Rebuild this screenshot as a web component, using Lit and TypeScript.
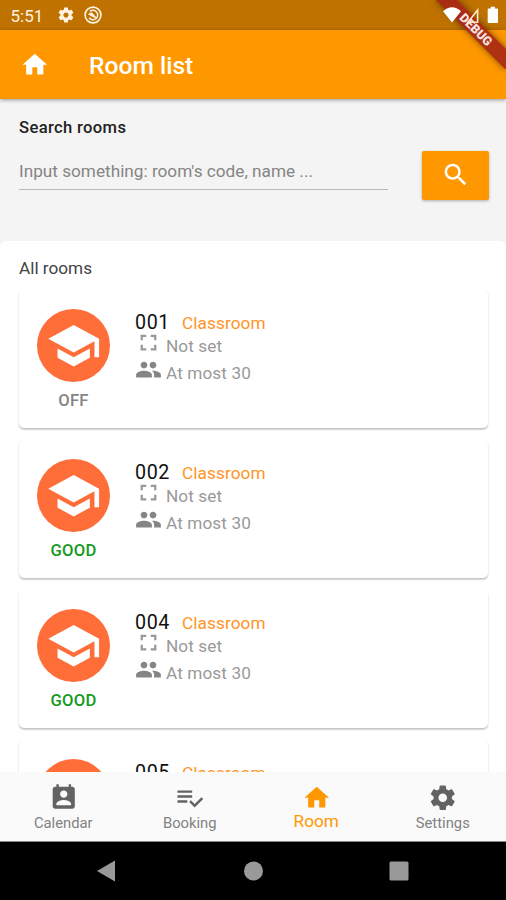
import { LitElement, html, css, svg } from "lit";
import { customElement, property } from "lit/decorators.js";

const ICONS: Record<string, string> = {
  home: "M10 20v-6h4v6h5v-8h3L12 3 2 12h3v8z",
  search:
    "M15.5 14h-.79l-.28-.27C15.41 12.59 16 11.11 16 9.5 16 5.91 13.09 3 9.5 3S3 5.91 3 9.5 5.91 16 9.5 16c1.61 0 3.09-.59 4.23-1.57l.27.28v.79l5 4.99L20.49 19l-4.99-5zm-6 0C7.01 14 5 11.99 5 9.5S7.01 5 9.5 5 14 7.01 14 9.5 11.99 14 9.5 14z",
  school: "M5 13.18v4L12 21l7-3.82v-4L12 17l-7-3.82zM12 3L1 9l11 6 9-4.91V17h2V9L12 3z",
  area: "M7 14H5v5h5v-2H7v-3zm-2-4h2V7h3V5H5v5zm12 7h-3v2h5v-5h-2v3zM14 5v2h3v3h2V5h-5z",
  people:
    "M16 11c1.66 0 2.99-1.34 2.99-3S17.66 5 16 5c-1.66 0-3 1.34-3 3s1.34 3 3 3zm-8 0c1.66 0 2.99-1.34 2.99-3S9.66 5 8 5C6.34 5 5 6.34 5 8s1.34 3 3 3zm0 2c-2.33 0-7 1.17-7 3.5V19h14v-2.5c0-2.33-4.67-3.5-7-3.5zm8 0c-.29 0-.62.02-.97.05 1.16.84 1.97 1.97 1.97 3.45V19h6v-2.5c0-2.33-4.67-3.5-7-3.5z",
  calendar:
    "M19 3h-1V1h-2v2H8V1H6v2H5c-1.11 0-2 .9-2 2v14c0 1.1.89 2 2 2h14c1.1 0 2-.9 2-2V5c0-1.1-.9-2-2-2zm-7 3c1.66 0 3 1.34 3 3s-1.34 3-3 3-3-1.34-3-3 1.34-3 3-3zm6 12H6v-1c0-2 4-3.1 6-3.1s6 1.1 6 3.1v1z",
  booking:
    "M14 10H2v2h12v-2zm0-4H2v2h12V6zM2 16h8v-2H2v2zm19.5-4.5L23 13l-6.99 7-4.51-4.5L13 14l3.01 3 5.49-5.5z",
  settings:
    "M19.43 12.98c.04-.32.07-.64.07-.98s-.03-.66-.07-.98l2.11-1.65c.19-.15.24-.42.12-.64l-2-3.46c-.12-.22-.39-.3-.61-.22l-2.49 1c-.52-.4-1.08-.73-1.69-.98l-.38-2.65C14.46 2.18 14.25 2 14 2h-4c-.25 0-.46.18-.49.42l-.38 2.65c-.61.25-1.17.59-1.69.98l-2.49-1c-.23-.09-.49 0-.61.22l-2 3.46c-.13.22-.07.49.12.64l2.11 1.65c-.04.32-.07.65-.07.98s.03.66.07.98l-2.11 1.65c-.19.15-.24.42-.12.64l2 3.46c.12.22.39.3.61.22l2.49-1c.52.4 1.08.73 1.69.98l.38 2.65c.03.24.24.42.49.42h4c.25 0 .46-.18.49-.42l.38-2.65c.61-.25 1.17-.59 1.69-.98l2.49 1c.23.09.49 0 .61-.22l2-3.46c.12-.22.07-.49-.12-.64l-2.11-1.65zM12 15.5c-1.93 0-3.5-1.57-3.5-3.5s1.57-3.5 3.5-3.5 3.5 1.57 3.5 3.5-1.57 3.5-3.5 3.5z",
};

@customElement("md-icon")
class MdIcon extends LitElement {
  @property() name = "home";
  static styles = css`
    :host { display: block; width: 29.5px; height: 29.5px; flex: none; }
    svg { display: block; width: 100%; height: 100%; fill: currentColor; }
  `;
  render() {
    return html`<svg viewBox="0 0 24 24">${svg`<path d=${ICONS[this.name]}></path>`}</svg>`;
  }
}

@customElement("room-card")
class RoomCard extends LitElement {
  @property() code = "";
  @property() status = "";
  static styles = css`
    :host {
      display: flex; box-sizing: border-box; height: 138px; padding-top: 19px; flex: none;
      background: #fff; border-radius: 5px;
      box-shadow: 0 1.5px 1.5px rgba(0,0,0,.16), 0 1px 2px rgba(0,0,0,.1);
    }
    .left { width: 73px; margin-left: 18px; display: flex; flex-direction: column; align-items: center; }
    .avatar {
      width: 73px; height: 73px; border-radius: 50%; background: #ff6d38; color: #fff;
      display: flex; align-items: center; justify-content: center;
    }
    .avatar md-icon { width: 55.4px; height: 55.4px; }
    .status { font-weight: 500; font-size: 16.6px; line-height: 20px; margin-top: 9px; letter-spacing: .3px; color: #858585; }
    .good { color: #159a1c; }
    .info { margin-left: 25px; color: #999; font-size: 17.2px; letter-spacing: .1px; }
    .head { display: flex; align-items: baseline; height: 24px; line-height: 28px; }
    .code { font-size: 19.7px; color: #111; letter-spacing: .6px; width: 47px; }
    .kind { color: #ff9426; }
    .line { display: flex; align-items: center; height: 27px; }
    .line md-icon { width: 27px; height: 27px; margin-right: 4px; }
    .size { height: 26px; }
    .size md-icon { margin-top: -8px; }
    .cap md-icon { margin-top: -7px; color: #858585; }
  `;
  render() {
    return html`
      <div class="left">
        <div class="avatar"><md-icon name="school"></md-icon></div>
        <div class="status ${this.status === "GOOD" ? "good" : ""}">${this.status}</div>
      </div>
      <div class="info">
        <div class="head"><span class="code">${this.code}</span><span class="kind">Classroom</span></div>
        <div class="line size"><md-icon name="area"></md-icon>Not set</div>
        <div class="line cap"><md-icon name="people"></md-icon>At most 30</div>
      </div>`;
  }
}

@customElement("app-root")
class AppRoot extends LitElement {
  static styles = css`
    :host {
      display: flex; flex-direction: column; position: relative; width: 506px; height: 900px;
      overflow: hidden; background: #f4f4f4; font-family: Roboto, sans-serif;
    }
    .statusbar {
      height: 30px; flex: none; background: #bf7200; display: flex; align-items: center;
      padding-left: 10.5px; box-sizing: border-box; font-size: 17px; color: #fff3e4;
    }
    .time { width: 46.5px; line-height: 30px; padding-top: 2px; }
    .statusbar md-icon { width: 18px; height: 18px; margin-right: 9px; }
    .target { width: 18px; height: 18px; }
    .system { position: absolute; right: 6px; top: 5px; z-index: 3; }
    .appbar {
      height: 69px; flex: none; background: #ff9800; color: #fff; display: flex; align-items: center;
      box-shadow: 0 1px 4px rgba(0,0,0,.38); padding-left: 20px; z-index: 1;
    }
    .title { margin-left: 39.5px; font-size: 24.6px; font-weight: 500; padding-top: 1px; }
    .search { height: 142px; flex: none; padding: 18px 17.5px 0 19px; box-sizing: border-box; }
    .caption { font-size: 16.6px; line-height: 22px; font-weight: 500; color: #222; letter-spacing: .35px; }
    .row { display: flex; justify-content: space-between; margin-top: 12px; }
    .field {
      width: 369px; height: 39px; box-sizing: border-box; border-bottom: 1px solid #b8b8b8;
      font-size: 17.2px; line-height: 41px; color: #858585;
    }
    .go {
      width: 67px; height: 49px; background: #ff9800; color: #fff; border-radius: 2px;
      display: flex; align-items: center; justify-content: center; box-shadow: 0 1px 3px rgba(0,0,0,.3);
    }
    .go md-icon { margin-left: 2px; margin-top: -1px; }
    .rooms {
      flex: 1; min-height: 0; overflow: hidden; background: #fff; border-radius: 6px 6px 0 0;
      padding: 16px 18px 0 19px; display: flex; flex-direction: column;
    }
    .rooms .caption { font-weight: 400; color: #444; margin-bottom: 11px; font-size: 17.2px; letter-spacing: 0; flex: none; }
    .cards { display: flex; flex-direction: column; gap: 12px; }
    .tabs {
      height: 70px; flex: none; background: #fafafa; display: grid; grid-template-columns: repeat(4, 1fr);
      z-index: 1; border-bottom: 1px solid #888; box-sizing: border-box;
    }
    .tab { display: flex; flex-direction: column; align-items: center; padding-top: 10.5px; color: #636363; }
    .tab span { font-size: 14.8px; line-height: 20px; color: #828282; margin-top: 1px; }
    .tab.on, .tab.on span { color: #ff9800; }
    .tab.on span { font-size: 17.2px; margin-top: -1px; }
    .navbar { height: 58px; flex: none; background: #000; display: flex; justify-content: center; }
    .banner {
      position: absolute; left: 427.2px; top: 22.2px; width: 98.4px; height: 14.8px; z-index: 2;
      transform: rotate(45deg); background: rgba(165,38,20,.9); box-shadow: 0 0 7px rgba(0,0,0,.5);
      color: #f8e4e4; text-align: center; font-weight: 900; font-size: 12.5px; line-height: 15px;
    }
  `;
  render() {
    const rooms = [["001", "OFF"], ["002", "GOOD"], ["004", "GOOD"], ["005", "GOOD"]];
    const tabs = [["calendar", "Calendar"], ["booking", "Booking"], ["home", "Room"], ["settings", "Settings"]];
    return html`
      <div class="statusbar">
        <span class="time">5:51</span>
        <md-icon name="settings"></md-icon>
        <svg class="target" viewBox="0 0 18 18" fill="none" stroke="#fff3e4" stroke-width="1.6">
          <circle cx="9" cy="9" r="7.9"></circle>
          <path d="M6 5.400A4.700 4.700 0 1 1 5.200 11.800" stroke-width="1.500"></path>
          <path d="M4.600 8.200L7.600 6.800L12 11.600L9 10.600z" fill="#fff3e4" stroke-width="1"></path>
        </svg>
        <svg class="system" width="58" height="20" viewBox="0 0 58 20">
          <path d="M1 6.200Q10 -1.500 19 6.200L10 17.500z" fill="#fff"></path>
          <path d="M35.600 5v12.200H26z" fill="none" stroke="#ffe9cb" stroke-width="1.600"></path>
          <path d="M46.500 3.500h2.200V1.800h4.300v1.700h2.200q.8 0 .8.8V17.300q0 .8-.8.8h-8.700q-.8 0-.8-.8V4.300q0-.8.8-.8z" fill="#fff"></path>
        </svg>
      </div>
      <div class="appbar"><md-icon name="home"></md-icon><span class="title">Room list</span></div>
      <div class="search">
        <div class="caption">Search rooms</div>
        <div class="row">
          <div class="field">Input something: room's code, name ...</div>
          <div class="go"><md-icon name="search"></md-icon></div>
        </div>
      </div>
      <div class="rooms">
        <div class="caption">All rooms</div>
        <div class="cards">
          ${rooms.map(([c, s]) => html`<room-card code=${c} status=${s}></room-card>`)}
        </div>
      </div>
      <div class="tabs">
        ${tabs.map(([i, t]) => html`<div class="tab ${i === "home" ? "on" : ""}"><md-icon name=${i}></md-icon><span>${t}</span></div>`)}
      </div>
      <div class="navbar">
        <svg width="506" height="58" viewBox="0 0 506 58" fill="#999">
          <path d="M97 29L115 18.500v21z"></path>
          <circle cx="253.500" cy="29" r="9.500"></circle>
          <rect x="389.500" y="19.500" width="19" height="19" rx="1.500"></rect>
        </svg>
      </div>
      <div class="banner">DEBUG</div>`;
  }
}
